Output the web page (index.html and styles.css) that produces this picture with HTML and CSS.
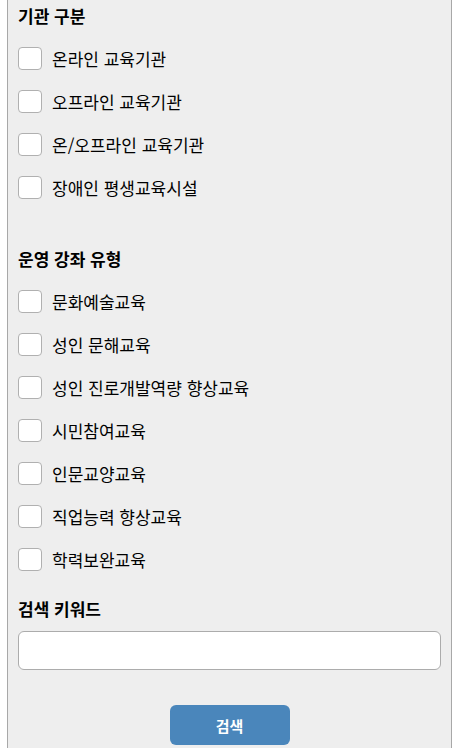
FILE: index.html
```html
<!DOCTYPE html>
<html lang="ko">
<head>
<meta charset="utf-8">
<link rel="stylesheet" href="styles.css">
</head>
<body>
<div class="panel">
  <section class="group">
    <h3 class="title">기관 구분</h3>
    <ul class="list">
      <li class="row"><span class="box"></span><span class="label">온라인 교육기관</span></li>
      <li class="row"><span class="box"></span><span class="label">오프라인 교육기관</span></li>
      <li class="row"><span class="box"></span><span class="label">온/오프라인 교육기관</span></li>
      <li class="row"><span class="box"></span><span class="label">장애인 평생교육시설</span></li>
    </ul>
  </section>
  <section class="group group-2">
    <h3 class="title">운영 강좌 유형</h3>
    <ul class="list">
      <li class="row"><span class="box"></span><span class="label">문화예술교육</span></li>
      <li class="row"><span class="box"></span><span class="label">성인 문해교육</span></li>
      <li class="row"><span class="box"></span><span class="label">성인 진로개발역량 향상교육</span></li>
      <li class="row"><span class="box"></span><span class="label">시민참여교육</span></li>
      <li class="row"><span class="box"></span><span class="label">인문교양교육</span></li>
      <li class="row"><span class="box"></span><span class="label">직업능력 향상교육</span></li>
      <li class="row"><span class="box"></span><span class="label">학력보완교육</span></li>
    </ul>
  </section>
  <section class="group group-3">
    <h3 class="title">검색 키워드</h3>
    <div class="input"></div>
    <div class="actions"><button class="btn">검색</button></div>
  </section>
</div>
</body>
</html>
```
FILE: styles.css
```css
html, body {
  margin: 0;
  padding: 0;
  background: #fff;
}
body {
  font-family: "Noto Sans CJK KR", "Noto Sans", sans-serif;
  color: #111;
  overflow: hidden;
  height: 748px;
}
.panel {
  margin-left: 7px;
  width: 445px;
  height: 760px;
  background: #eeeeee;
  border-left: 1px solid #a8a8a8;
  border-right: 1px solid #a8a8a8;
  padding: 0 10px;
  box-sizing: border-box;
}
.group-2 { margin-top: 34px; }
.group-3 { margin-top: 12px; }
.title {
  margin: 0;
  font-size: 17px;
  font-weight: 700;
  line-height: 32px;
  height: 32px;
  color: #000;
}
.list {
  list-style: none;
  margin: 5px 0 0 0;
  padding: 0;
}
.row {
  height: 43px;
  display: flex;
  align-items: center;
  gap: 10px;
}
.box {
  width: 24px;
  height: 23px;
  box-sizing: border-box;
  border: 1px solid #b0b0b0;
  border-radius: 4px;
  background: #fff;
  flex: none;
}
.label {
  font-size: 17px;
  line-height: 20px;
  color: #000;
}
.input {
  margin-top: 6px;
  height: 39px;
  box-sizing: border-box;
  border: 1px solid #acacac;
  border-radius: 6px;
  background: #fff;
}
.actions {
  display: flex;
  justify-content: center;
  margin-top: 35px;
}
.btn {
  width: 120px;
  height: 40px;
  border: none;
  border-radius: 6px;
  background: #4a86bb;
  color: #fff;
  font-family: inherit;
  font-size: 15px;
  font-weight: 700;
  padding: 0;
}
```
